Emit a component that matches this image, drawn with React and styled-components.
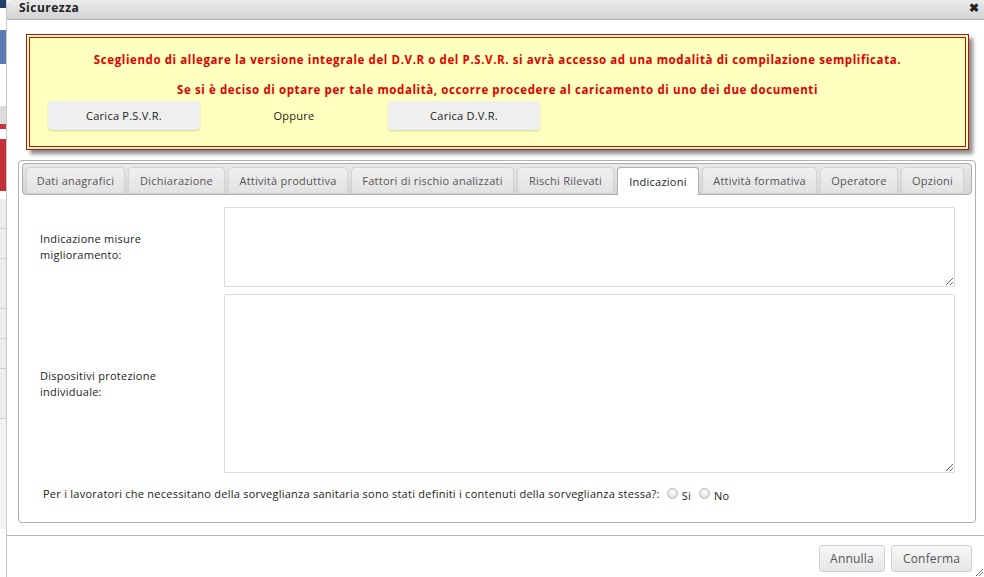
import React from "react";
import styled, { createGlobalStyle } from "styled-components";

const Global = createGlobalStyle`
  html, body { margin: 0; padding: 0; background: #fff; overflow: hidden; }
  body { font-family: "Open Sans", "DejaVu Sans", sans-serif; letter-spacing: 0.25px; }
  * { box-sizing: border-box; }
`;

const Page = styled.div`
  display: flex;
  width: 984px;
  height: 577px;
  overflow: hidden;
`;

const Strip = styled.div`
  width: 7px;
  flex: none;
  display: flex;
  flex-direction: column;
  background: #fff;
  border-right: 1px solid #c8c8c8;
`;

const StripBlock = styled.div`
  height: ${(p) => p.h}px;
  background: ${(p) => p.bg};
  border-bottom: ${(p) => (p.line ? "1px solid #cfcfcf" : "none")};
`;

const Dialog = styled.div`
  flex: 1;
  display: flex;
  flex-direction: column;
  background: #fff;
  min-width: 0;
`;

const TitleBar = styled.div`
  height: 20px;
  flex: none;
  display: flex;
  align-items: center;
  justify-content: space-between;
  padding: 0 5px 4px 12px;
  background: linear-gradient(#ececec, #d2d2d2);
  border-bottom: 1px solid #b4b4b4;
  border-top-left-radius: 5px;
  font-family: "Open Sans", sans-serif;
  font-weight: 700;
  font-size: 12px;
  letter-spacing: 0.5px;
  color: #222;
`;

const Close = styled.span`
  font-size: 12px;
  color: #222;
  line-height: 1;
`;

const Body = styled.div`
  flex: 1;
  display: flex;
  flex-direction: column;
  padding: 14px 8px 0 11px;
`;

const Notice = styled.div`
  margin: 0 7px 0 8px;
  height: 116px;
  background: #ffffbe;
  border: 1px solid #b5140a;
  box-shadow: inset 0 0 0 2px #ffffbe, inset 0 0 0 3px #c0140a, 4px 4px 4px #8a8a8a;
  display: flex;
  flex-direction: column;
  align-items: center;
  padding-top: 17px;
`;

const NoticeText = styled.p`
  margin: 0 0 ${(p) => p.gap}px;
  color: #e00000;
  font-family: "Open Sans", sans-serif;
  font-weight: 700;
  font-size: 11.5px;
  letter-spacing: 0.6px;
  line-height: 16px;
  text-align: center;
  white-space: nowrap;
`;

const NoticeActions = styled.div`
  align-self: stretch;
  display: flex;
  align-items: center;
  padding-left: 21px;
  margin-top: 3px;
`;

const SoftButton = styled.button`
  width: 152px;
  height: 29px;
  border: none;
  border-radius: 4px;
  background: #efefef;
  box-shadow: 0 1px 2px rgba(0, 0, 0, 0.18);
  font-family: "Open Sans", sans-serif;
  font-size: 11px;
  letter-spacing: 0.25px;
  color: #222;
  padding: 0;
`;

const Oppure = styled.span`
  width: 188px;
  text-align: center;
  font-size: 11px;
  color: #222;
  margin-top: -1px;
`;

const Panel = styled.div`
  margin-top: 10px;
  height: 363px;
  border: 1px solid #b0b0b0;
  border-radius: 4px;
  padding: 2px 3px;
  display: flex;
  flex-direction: column;
`;

const TabBar = styled.div`
  height: 32px;
  display: flex;
  align-items: flex-end;
  gap: 3px;
  padding: 0 3px;
  background: linear-gradient(#e8e8e8, #d4d4d4);
  border: 1px solid #aeaeae;
  border-radius: 4px;
`;

const Tab = styled.div`
  height: ${(p) => (p.active ? 28 : 27)}px;
  margin-bottom: ${(p) => (p.active ? -1 : 0)}px;
  display: flex;
  align-items: center;
  justify-content: center;
  padding-bottom: 1px;
  width: ${(p) => p.w}px;
  border: 1px solid ${(p) => (p.active ? "#aeaeae" : "#d2d2d2")};
  border-bottom: ${(p) => (p.active ? "none" : "1px solid #d2d2d2")};
  border-radius: 4px 4px 0 0;
  background: ${(p) => (p.active ? "#fff" : "linear-gradient(#f0f0f0, #e2e2e2)")};
  font-size: 11px;
  color: ${(p) => (p.active ? "#222" : "#555")};
  white-space: nowrap;
`;

const Form = styled.div`
  flex: 1;
  display: flex;
  flex-direction: column;
  padding: 12px 17px 0 18px;
  gap: 7px;
`;

const FieldRow = styled.div`
  display: grid;
  grid-template-columns: 184px 1fr;
  align-items: center;
`;

const Label = styled.label`
  font-size: 11px;
  line-height: 16px;
  color: #222;
  width: 135px;
`;

const Area = styled.textarea`
  display: block;
  width: 100%;
  height: ${(p) => p.h}px;
  border: 1px solid #dcdcdc;
  border-radius: 1px;
  resize: vertical;
  background: #fff;
  font-family: inherit;
  margin: 0;
`;

const Question = styled.div`
  display: flex;
  align-items: center;
  padding-left: 3px;
  margin-top: 4px;
  font-size: 11px;
  color: #222;
  white-space: nowrap;
`;

const Radio = styled.span`
  width: 11px;
  height: 11px;
  border-radius: 50%;
  border: 1px solid #b8b8b8;
  background: radial-gradient(circle at 50% 35%, #fafafa, #d8d8d8);
  margin: 0 4px 0 ${(p) => p.ml}px;
  display: inline-block;
  flex: none;
`;

const RadioText = styled.span`
  margin-top: 4px;
`;

const Footer = styled.div`
  margin: 12px -8px 0 -11px;
  border-top: 1px solid #b4b4b4;
  display: flex;
  justify-content: flex-end;
  gap: 6px;
  padding: 9px 12px 0 0;
  position: relative;
  flex: 1;
`;

const FootButton = styled.button`
  height: 27px;
  width: ${(p) => p.w}px;
  border: 1px solid #d0d0d0;
  border-radius: 3px;
  background: linear-gradient(#f7f7f7, #e6e6e6);
  font-family: "Open Sans", sans-serif;
  font-size: 12px;
  letter-spacing: 0.2px;
  color: #555;
  padding: 0;
`;

const Grip = styled.svg`
  position: absolute;
  right: 1px;
  bottom: 1px;
`;

const tabs = [
  ["Dati anagrafici", 99],
  ["Dichiarazione", 97],
  ["Attività produttiva", 120],
  ["Fattori di rischio analizzati", 163],
  ["Rischi Rilevati", 97],
  ["Indicazioni", 82],
  ["Attività formativa", 115],
  ["Operatore", 78],
  ["Opzioni", 63],
];

export default function App() {
  return (
    <>
      <Global />
      <Page>
        <Strip>
          <StripBlock h={8} bg="#24406e" />
          <StripBlock h={22} bg="#fff" />
          <StripBlock h={34} bg="#5a7bb0" />
          <StripBlock h={42} bg="#fff" />
          <StripBlock h={18} bg="#dcdcdc" />
          <StripBlock h={5} bg="#c8323c" />
          <StripBlock h={10} bg="#fff" />
          <StripBlock h={52} bg="#c4303a" />
          <StripBlock h={8} bg="#fff" />
          <StripBlock h={30} bg="#ececec" line />
          <StripBlock h={30} bg="#ececec" line />
          <StripBlock h={50} bg="#ececec" line />
          <StripBlock h={30} bg="#ececec" line />
          <StripBlock h={30} bg="#ececec" line />
          <StripBlock h={50} bg="#ececec" line />
          <StripBlock h={110} bg="#f2f2f2" />
        </Strip>
        <Dialog>
          <TitleBar>
            <span>Sicurezza</span>
            <Close>✖</Close>
          </TitleBar>
          <Body>
            <Notice>
              <NoticeText gap={14}>
                Scegliendo di allegare la versione integrale del D.V.R o del P.S.V.R. si avrà accesso ad una modalità di compilazione semplificata.
              </NoticeText>
              <NoticeText gap={0}>
                Se si è deciso di optare per tale modalità, occorre procedere al caricamento di uno dei due documenti
              </NoticeText>
              <NoticeActions>
                <SoftButton>Carica P.S.V.R.</SoftButton>
                <Oppure>Oppure</Oppure>
                <SoftButton>Carica D.V.R.</SoftButton>
              </NoticeActions>
            </Notice>
            <Panel>
              <TabBar>
                {tabs.map(([t, w]) => (
                  <Tab key={t} w={w} active={t === "Indicazioni"}>
                    {t}
                  </Tab>
                ))}
              </TabBar>
              <Form>
                <FieldRow>
                  <Label>Indicazione misure miglioramento:</Label>
                  <Area h={80} />
                </FieldRow>
                <FieldRow>
                  <Label>Dispositivi protezione individuale:</Label>
                  <Area h={179} />
                </FieldRow>
                <Question>
                  Per i lavoratori che necessitano della sorveglianza sanitaria sono stati definiti i contenuti della sorveglianza stessa?:
                  <Radio ml={7} />
                  <RadioText>Si</RadioText>
                  <Radio ml={8} />
                  <RadioText>No</RadioText>
                </Question>
              </Form>
            </Panel>
            <Footer>
              <FootButton w={66}>Annulla</FootButton>
              <FootButton w={81}>Conferma</FootButton>
              <Grip width="8" height="8" viewBox="0 0 8 8">
                <path d="M1 8 L8 1 M4 8 L8 4" stroke="#777" strokeWidth="1" />
              </Grip>
            </Footer>
          </Body>
        </Dialog>
      </Page>
    </>
  );
}
